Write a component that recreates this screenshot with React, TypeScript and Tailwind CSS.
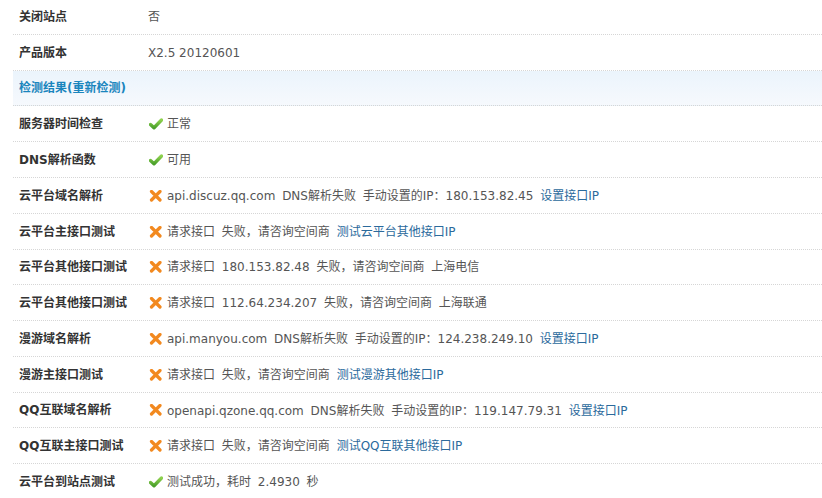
import type { ReactNode } from "react";

const cjk = "font-['DejaVu_Sans','Noto_Sans_CJK_SC',sans-serif]";

function Check() {
  return (
    <svg width="14" height="12" viewBox="0 0 14 12" className="shrink-0">
      <defs>
        <linearGradient id="ck" x1="0" y1="0" x2="0" y2="1">
          <stop offset="0" stopColor="#8fd14f" />
          <stop offset="1" stopColor="#4aa02a" />
        </linearGradient>
      </defs>
      <path d="M1.5 6.5 L5 9.8 L12.5 2" fill="none" stroke="url(#ck)" strokeWidth="3.4" strokeLinecap="round" strokeLinejoin="round" />
    </svg>
  );
}

function Cross() {
  return (
    <svg width="14" height="12" viewBox="0 0 14 12" className="shrink-0">
      <path d="M2.5 1.5 L11 10 M11 1.5 L2.5 10" fill="none" stroke="#f2891f" strokeWidth="3.2" strokeLinecap="round" />
    </svg>
  );
}

function Link({ children }: { children: ReactNode }) {
  return <span className="text-[#2b6a9c]">{children}</span>;
}

// full-width colon drawn with the CJK face so it keeps its width
function Colon() {
  return <span className="font-['Noto_Sans_CJK_SC',sans-serif]">：</span>;
}

type Row = { label: string; ok?: boolean; value: ReactNode; h: string };

const rows: Row[] = [
  { label: "服务器时间检查", ok: true, value: "正常", h: "h-[36px]" },
  { label: "DNS解析函数", ok: true, value: "可用", h: "h-[36px]" },
  {
    label: "云平台域名解析",
    ok: false,
    value: (
      <>
        api.discuz.qq.com DNS解析失败 手动设置的IP<Colon />180.153.82.45 <Link>设置接口IP</Link>
      </>
    ),
    h: "h-[36px]",
  },
  {
    label: "云平台主接口测试",
    ok: false,
    value: (
      <>
        请求接口 失败，请咨询空间商 <Link>测试云平台其他接口IP</Link>
      </>
    ),
    h: "h-[36px]",
  },
  { label: "云平台其他接口测试", ok: false, value: "请求接口 180.153.82.48 失败，请咨询空间商 上海电信", h: "h-[35px]" },
  { label: "云平台其他接口测试", ok: false, value: "请求接口 112.64.234.207 失败，请咨询空间商 上海联通", h: "h-[36px]" },
  {
    label: "漫游域名解析",
    ok: false,
    value: (
      <>
        api.manyou.com DNS解析失败 手动设置的IP<Colon />124.238.249.10 <Link>设置接口IP</Link>
      </>
    ),
    h: "h-[36px]",
  },
  {
    label: "漫游主接口测试",
    ok: false,
    value: (
      <>
        请求接口 失败，请咨询空间商 <Link>测试漫游其他接口IP</Link>
      </>
    ),
    h: "h-[36px]",
  },
  {
    label: "QQ互联域名解析",
    ok: false,
    value: (
      <>
        openapi.qzone.qq.com DNS解析失败 手动设置的IP<Colon />119.147.79.31 <Link>设置接口IP</Link>
      </>
    ),
    h: "h-[35px]",
  },
  {
    label: "QQ互联主接口测试",
    ok: false,
    value: (
      <>
        请求接口 失败，请咨询空间商 <Link>测试QQ互联其他接口IP</Link>
      </>
    ),
    h: "h-[36px]",
  },
  { label: "云平台到站点测试", ok: true, value: "测试成功，耗时 2.4930 秒", h: "h-[36px]" },
];

function Line({ label, children, h, last }: { label: string; children: ReactNode; h: string; last?: boolean }) {
  return (
    <div className={`flex items-center ${h} ${last ? "" : "border-b border-dotted border-[#d6d6d6]"}`}>
      <div className="w-[135px] shrink-0 pl-[6px] font-bold text-[#333]">{label}</div>
      <div className="flex items-center text-[#555]">{children}</div>
    </div>
  );
}

export default function App() {
  return (
    <div className={`w-[822px] h-[498px] overflow-hidden bg-white pl-[13px] text-[12px] ${cjk}`}>
      <Line label="关闭站点" h="h-[35px]">
        否
      </Line>
      <Line label="产品版本" h="h-[36px]">
        X2.5 20120601
      </Line>
      <div className="flex h-[35px] items-center border-b border-dotted border-[#d6d6d6] bg-gradient-to-b from-[#ebf4fc] to-[#f6f9fd] pl-[6px] font-bold text-[#1a85bd]">
        检测结果(重新检测)
      </div>
      {rows.map((r, i) => (
        <Line key={i} label={r.label} h={r.h} last={i === rows.length - 1}>
          <span className="ml-[1px] mr-[4px] flex">{r.ok ? <Check /> : <Cross />}</span>
          <span className="whitespace-pre [word-spacing:3px]">{r.value}</span>
        </Line>
      ))}
    </div>
  );
}
